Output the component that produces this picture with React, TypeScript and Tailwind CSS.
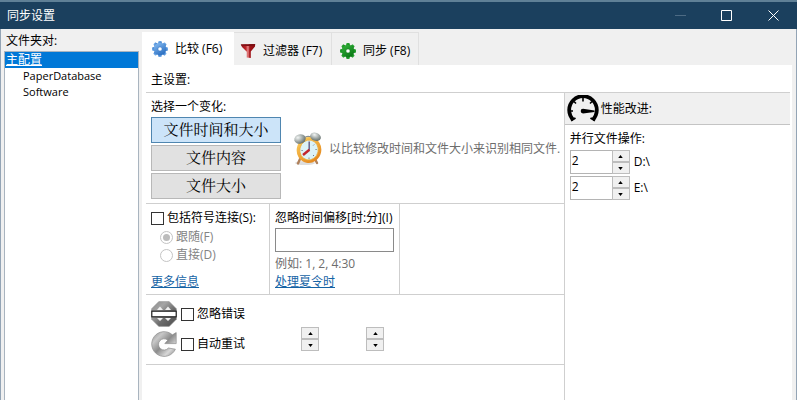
import { useState } from 'react';
import type { ReactNode } from 'react';

const pairs = ['PaperDatabase', 'Software'];

const variants = ['文件时间和大小', '文件内容', '文件大小'];

function GearIcon({ light, dark }: { light: string; dark: string }) {
  const id = `gear-${dark.slice(1)}`;
  return (
    <svg viewBox="0 0 18 18" className="size-[18px] shrink-0" aria-hidden="true">
      <defs>
        <linearGradient id={id} x1="0" y1="0" x2="0.6" y2="1">
          <stop offset="0" stopColor={light} />
          <stop offset="1" stopColor={dark} />
        </linearGradient>
      </defs>
      <g fill={`url(#${id})`}>
        {[0, 45, 90, 135, 180, 225, 270, 315].map(a => (
          <path key={a} d="M6.8 4 L7.6 1 H10.4 L11.2 4 Z" transform={`rotate(${a} 9 9)`} />
        ))}
      </g>
      <circle cx="9" cy="9" r="6.2" fill={`url(#${id})`} />
      <circle cx="9" cy="9" r="2.1" fill="#fff" stroke={dark} strokeWidth="0.5" />
    </svg>
  );
}

function FunnelIcon() {
  return (
    <svg viewBox="0 0 18 18" className="size-[18px] shrink-0" aria-hidden="true">
      <defs>
        <linearGradient id="funnel" x1="0" x2="1">
          <stop offset="0" stopColor="#8d1015" />
          <stop offset="0.35" stopColor="#c02428" />
          <stop offset="0.5" stopColor="#e88a8a" />
          <stop offset="0.62" stopColor="#a3151a" />
          <stop offset="1" stopColor="#8a0c10" />
        </linearGradient>
      </defs>
      <path d="M1.8 2.4 L16.2 2 L16 4.6 L11.8 9.6 V16 L7.8 15.4 V9.8 L3 5 Z" fill="url(#funnel)" />
      <path d="M1.8 2.4 L16.2 2 L15.6 3.4 Q9 4.6 2.4 3.6 Z" fill="#7a1014" />
    </svg>
  );
}

function ClockIcon() {
  return (
    <svg viewBox="0 0 30 34" className="h-[34px] w-[30px] shrink-0" aria-hidden="true">
      <defs>
        <linearGradient id="ring" x1="0" y1="0" x2="1" y2="1">
          <stop offset="0" stopColor="#ffd560" />
          <stop offset="1" stopColor="#df7a12" />
        </linearGradient>
        <radialGradient id="bell" cx="0.35" cy="0.3" r="0.8">
          <stop offset="0" stopColor="#f2f5f4" />
          <stop offset="1" stopColor="#56625f" />
        </radialGradient>
      </defs>
      <ellipse cx="12" cy="31" rx="10" ry="2" fill="#ddd" />
      <path d="M7 27 L5 31.5 M22 27 L24 31" stroke="#b0815b" strokeWidth="2.4" strokeLinecap="round" />
      <path d="M9 8 Q14 2 20 6" fill="none" stroke="#8b8f8c" strokeWidth="1.2" />
      <ellipse cx="16" cy="18" rx="12.3" ry="13" fill="url(#ring)" transform="rotate(12 16 18)" />
      <ellipse cx="16" cy="18" rx="9.2" ry="10" fill="#dcf2f6" stroke="#ecaf3d" strokeWidth="0.8" transform="rotate(12 16 18)" />
      <ellipse cx="7" cy="7" rx="5.8" ry="4.6" fill="url(#bell)" transform="rotate(-14 7 7)" />
      <ellipse cx="22.5" cy="4.8" rx="5.5" ry="4" fill="url(#bell)" transform="rotate(20 22.5 4.8)" />
      <path d="M16 25.6 v1.2 M8.5 18.5 h1.2 M22.5 17.5 h1.2 M21.2 12.5 l-1 1 M21 24 l-1-1" stroke="#6e7c83" strokeWidth="1" />
      <path d="M16.2 18.5 L16.2 9.5" stroke="#68628b" strokeWidth="1.5" />
      <path d="M16.4 17.8 L10 23" stroke="#c3242c" strokeWidth="2.4" />
    </svg>
  );
}

function GaugeIcon() {
  return (
    <svg viewBox="0 0 32 27" className="h-[27px] w-8 shrink-0" aria-hidden="true">
      <path d="M6.3 24.8 A13.8 13.8 0 1 1 25.7 24.8" fill="none" stroke="#000" strokeWidth="3.8" />
      <path d="M4 25.6 l4.5-2.6 M28 25.6 l-4.5-2.6" stroke="#000" strokeWidth="2" />
      <path d="M16 3 v3.6 M7 6.5 l2 2 M25 6.5 l-2 2 M3 16 h3" stroke="#000" strokeWidth="1.6" />
      <path d="M16 13.8 L27.5 15.4 V17 L16 18.4 A2.3 2.3 0 0 1 16 13.8 Z" fill="#000" />
    </svg>
  );
}

function StopIcon() {
  return (
    <svg viewBox="0 0 26 26" className="size-[26px] shrink-0" aria-hidden="true">
      <defs>
        <linearGradient id="steel" x1="0" y1="0" x2="1" y2="1">
          <stop offset="0" stopColor="#8a8a8a" />
          <stop offset="0.3" stopColor="#a5a5a5" />
          <stop offset="0.6" stopColor="#6c6c6c" />
          <stop offset="1" stopColor="#4d4d4d" />
        </linearGradient>
      </defs>
      <path d="M7.8 0.6 H18.2 L25.4 7.8 V18.2 L18.2 25.4 H7.8 L0.6 18.2 V7.8 Z" fill="url(#steel)" stroke="#999" strokeWidth="0.6" />
      <path d="M6 9 L9 5.6 L12 9 Z M14 9 L17 5.6 L20 9 Z M6 17 L9 20 L12 17 Z M14 17 L17 20 L20 17 Z" fill="#f0f0f0" />
      <rect x="0.8" y="10.2" width="24.4" height="5.6" fill="#fff" stroke="#222" strokeWidth="1.2" />
    </svg>
  );
}

function RetryIcon() {
  return (
    <svg viewBox="0 0 26 26" className="size-[26px] shrink-0" aria-hidden="true">
      <defs>
        <linearGradient id="retry" x1="0" y1="0" x2="1" y2="1">
          <stop offset="0" stopColor="#8a8a8a" />
          <stop offset="0.25" stopColor="#c8c8c8" />
          <stop offset="0.5" stopColor="#8c8c8c" />
          <stop offset="0.75" stopColor="#d8d8d8" />
          <stop offset="1" stopColor="#7b7b7b" />
        </linearGradient>
      </defs>
      <path
        d="M21.4 3.8 L25.2 1.6 V12.6 H13.8 L16.8 9.2 A5.6 5.6 0 1 0 17.4 17 L24.4 18.2 A12.4 12.4 0 1 1 21.4 3.8 Z"
        fill="url(#retry)"
        stroke="#8c8c8c"
        strokeWidth="0.7"
      />
    </svg>
  );
}

function SpinButtons({ onStep, label }: { onStep?: (n: number) => void; label: string }) {
  const cls = 'flex h-3 w-full items-center justify-center border border-[#bdbdbd] bg-[#f0f0f0]';
  return (
    <span className="flex w-[18px] shrink-0 flex-col">
      <button type="button" aria-label={`${label} +`} className={cls} onClick={() => onStep?.(1)}>
        <svg viewBox="0 0 6 4" className="h-[3px] w-[5px]"><path d="M3 0 L6 4 H0 Z" /></svg>
      </button>
      <button type="button" aria-label={`${label} -`} className={cls} onClick={() => onStep?.(-1)}>
        <svg viewBox="0 0 6 4" className="h-[3px] w-[5px]"><path d="M0 0 H6 L3 4 Z" /></svg>
      </button>
    </span>
  );
}

function DriveRow({ drive }: { drive: string }) {
  const [count, setCount] = useState(2);
  return (
    <div className="flex items-center gap-1">
      <div className="flex h-6 w-[60px]">
        <input
          id={`ops-${drive}`}
          value={count}
          onChange={e => setCount(Number(e.target.value) || 1)}
          className="h-6 w-full min-w-0 border-y border-l border-[#b4b4b4] bg-white px-px pb-1 outline-none"
        />
        <SpinButtons label={drive} onStep={n => setCount(c => Math.max(1, c + n))} />
      </div>
      <label htmlFor={`ops-${drive}`}>{drive}</label>
    </div>
  );
}

function Check({ children }: { children: ReactNode }) {
  return (
    <label className="flex items-center gap-[3px] whitespace-nowrap">
      <input type="checkbox" className="size-[13px] shrink-0 appearance-none border border-[#333] bg-white checked:bg-[#0078d7]" />
      {children}
    </label>
  );
}

function Radio({ children, checked }: { children: ReactNode; checked?: boolean }) {
  return (
    <label className="flex items-center gap-[3px] text-[#838383]">
      <input
        type="radio"
        name="symlink"
        disabled
        defaultChecked={checked}
        className="size-[13px] shrink-0 appearance-none rounded-full border border-[#c4c4c4] bg-white bg-clip-content p-[2px] checked:bg-[#bcbcbc]"
      />
      {children}
    </label>
  );
}

export default function App() {
  const [variant, setVariant] = useState(0);

  return (
    <div className="flex min-h-screen flex-col bg-[#f0f0f0] font-['Open_Sans','Noto_Sans_CJK_SC',sans-serif] text-[12px] leading-4 text-black">
      {/* Title bar */}
      <header className="flex h-[29px] shrink-0 items-center border-t-2 border-[#5f8096] bg-[#1b405e] pl-[7px] text-white">
        <h1 className="flex-1">同步设置</h1>
        <button type="button" aria-label="最小化" className="flex h-full w-[46px] items-center justify-center">
          <svg viewBox="0 0 11 11" className="size-[11px]"><path d="M0 5.5 H11" stroke="#4d6b84" /></svg>
        </button>
        <button type="button" aria-label="最大化" className="flex h-full w-[46px] items-center justify-center">
          <svg viewBox="0 0 11 11" className="size-[11px]"><path d="M0.5 0.5 H10.5 V10.5 H0.5 Z" fill="none" stroke="#fff" /></svg>
        </button>
        <button type="button" aria-label="关闭" className="flex h-full w-[48px] items-center justify-center">
          <svg viewBox="0 0 11 11" className="size-[11px]"><path d="M0.5 0.5 L10.5 10.5 M10.5 0.5 L0.5 10.5" stroke="#fff" /></svg>
        </button>
      </header>

      <div className="flex flex-1 border-r border-l border-[#93a4b5]">
        {/* Folder pairs */}
        <aside className="flex w-[138px] shrink-0 flex-col pl-[3px]">
          <div className="pt-1 pb-[2px] pl-[2px]">文件夹对:</div>
          <ul className="flex-1 border border-b-0 border-[#a9b4bf] bg-white">
            <li className="bg-[#0078d7] pl-px text-white underline">主配置</li>
            {pairs.map(p => (
              <li key={p} className="pl-[18px] text-[11px]">{p}</li>
            ))}
          </ul>
        </aside>

        <main className="flex min-w-0 flex-1 flex-col pt-[3px] pr-1 pl-[3px]">
          <nav role="tablist" className="flex h-[33px] items-stretch">
            <button type="button" role="tab" aria-selected="true" className="flex w-[92px] items-center gap-[6px] bg-white pl-[9px] whitespace-nowrap">
              <GearIcon light="#8cc0f5" dark="#2c70c2" />
              比较 (F6)
            </button>
            <button type="button" role="tab" aria-selected="false" className="flex w-[98px] items-center gap-[6px] border-t border-r border-[#e0e0e0] pt-1 pl-[5px] whitespace-nowrap">
              <FunnelIcon />
              过滤器 (F7)
            </button>
            <button type="button" role="tab" aria-selected="false" className="flex w-[87px] items-center gap-[6px] border-t border-r border-[#e0e0e0] pt-1 pl-[7px] whitespace-nowrap">
              <GearIcon light="#35b53c" dark="#0b7a17" />
              同步 (F8)
            </button>
          </nav>

          <div className="flex flex-1 flex-col bg-white pr-[2px] pl-1">
            <h2 className="border-b border-[#cfcfcf] pt-[7px] pb-1 pl-[5px]">主设置:</h2>

            <div className="flex flex-1">
              <div className="flex min-w-0 flex-[419] flex-col">
                {/* Comparison variant */}
                <section className="flex items-stretch border-b border-[#cfcfcf] pt-[6px] pb-1 pl-[5px]">
                  <div className="flex w-[130px] shrink-0 flex-col">
                    <div className="pb-[2px]">选择一个变化:</div>
                    <div className="flex flex-col gap-[2px]">
                      {variants.map((v, i) => (
                        <button
                          key={v}
                          type="button"
                          onClick={() => setVariant(i)}
                          className={`h-[26px] border font-['Liberation_Serif','Noto_Serif_CJK_SC','Noto_Sans_CJK_SC',serif] text-[15px] leading-5 ${
                            i === variant ? 'border-[#4f86b0] bg-[#cce4f9]' : 'border-[#b8b8b8] bg-[#e1e1e1]'
                          }`}
                        >
                          {v}
                        </button>
                      ))}
                    </div>
                  </div>
                  <div className="flex min-w-0 flex-1 items-center gap-[6px] pl-3">
                    <ClockIcon />
                    <p className="relative z-10 whitespace-nowrap text-[#6d6d6d]">以比较修改时间和文件大小来识别相同文件.</p>
                  </div>
                </section>

                {/* Symlinks and time shift */}
                <section className="flex border-b border-[#cfcfcf]">
                  <div className="flex w-[124px] shrink-0 flex-col border-r border-[#cfcfcf] pt-[6px] pb-1 pl-[5px]">
                    <Check>包括符号连接(S):</Check>
                    <div className="flex flex-col gap-[2px] pt-[3px] pb-2 pl-[9px]">
                      <Radio checked>跟随(F)</Radio>
                      <Radio>直接(D)</Radio>
                    </div>
                    <a href="#more" className="mt-auto w-fit text-[#1563a5] underline">更多信息</a>
                  </div>
                  <div className="flex w-[130px] shrink-0 flex-col border-r border-[#cfcfcf] px-[5px] pt-[6px] pb-1">
                    <label htmlFor="shift" className="whitespace-nowrap">忽略时间偏移[时:分](I)</label>
                    <input id="shift" className="mt-[2px] h-6 w-full border border-[#8a8a8a] px-1 outline-none" />
                    <span className="pt-1 text-[#6d6d6d]">例如: 1, 2, 4:30</span>
                    <a href="#dst" className="mt-[2px] w-fit text-[#1563a5] underline">处理夏令时</a>
                  </div>
                </section>

                {/* Error handling */}
                <section className="flex flex-col border-b border-[#cfcfcf] pt-[6px] pb-[7px] pl-[5px]">
                  <div className="flex items-center gap-[4px]">
                    <StopIcon />
                    <Check>忽略错误</Check>
                  </div>
                  <div className="flex items-start">
                    <div className="flex w-[150px] items-center gap-[4px] pt-1">
                      <RetryIcon />
                      <Check>自动重试</Check>
                    </div>
                    <div className="flex gap-[47px]">
                      <SpinButtons label="重试次数" />
                      <SpinButtons label="延迟" />
                    </div>
                  </div>
                </section>
              </div>

              {/* Performance */}
              <section className="min-w-0 flex-[226] border-l border-[#cfcfcf]">
                <h3 className="flex h-8 items-center gap-[2px] border-b border-[#c4c4c4] bg-[#f0f0f0] pl-[2px]">
                  <GaugeIcon />
                  性能改进:
                </h3>
                <div className="flex flex-col gap-[2px] pt-[6px] pl-[5px]">
                  <span className="pb-px">并行文件操作:</span>
                  <DriveRow drive="D:\" />
                  <DriveRow drive="E:\" />
                </div>
              </section>
            </div>
          </div>
        </main>
      </div>
    </div>
  );
}
